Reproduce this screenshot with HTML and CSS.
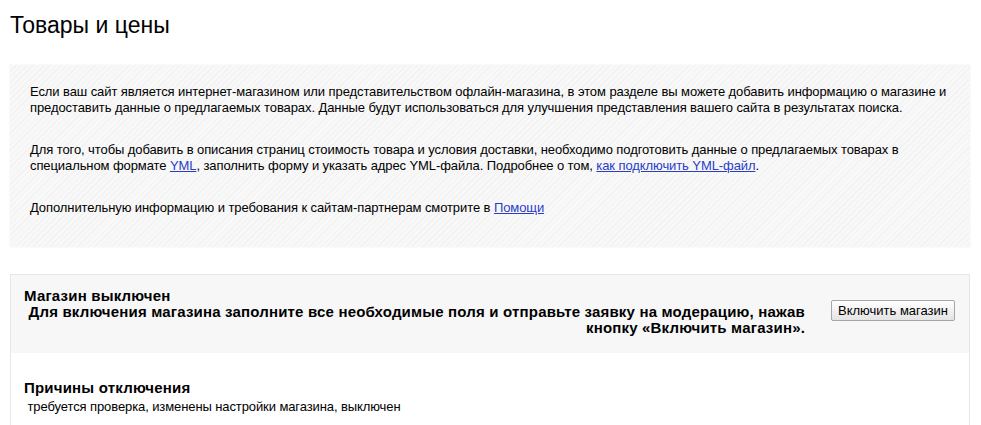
FILE: index.html
```html
<!DOCTYPE html>
<html lang="ru">
<head>
<meta charset="utf-8">
<title>Товары и цены</title>
<link rel="stylesheet" href="styles.css">
</head>
<body>
<div class="page">
  <h1 class="title">Товары и цены</h1>
  <div class="info">
    <p class="info-p">Если ваш сайт является интернет-магазином или представительством офлайн-магазина, в этом разделе вы можете добавить информацию о магазине и предоставить данные о предлагаемых товарах. Данные будут использоваться для улучшения представления вашего сайта в результатах поиска.</p>
    <p class="info-p">Для того, чтобы добавить в описания страниц стоимость товара и условия доставки, необходимо подготовить данные о предлагаемых товарах в специальном формате <a class="link" href="#">YML</a>, заполнить форму и указать адрес YML-файла. Подробнее о том, <a class="link" href="#">как подключить YML-файл</a>.</p>
    <p class="info-p">Дополнительную информацию и требования к сайтам-партнерам смотрите в <a class="link" href="#">Помощи</a></p>
  </div>
  <div class="shop">
    <div class="shop-head">
      <div class="shop-status">
        <div class="shop-title">Магазин выключен</div>
        <div class="shop-desc">Для включения магазина заполните все необходимые поля и отправьте заявку на модерацию, нажав кнопку «Включить магазин».</div>
      </div>
      <button class="btn" type="button">Включить магазин</button>
    </div>
    <div class="shop-body">
      <div class="reasons-title">Причины отключения</div>
      <div class="reasons-text">&nbsp;требуется проверка, изменены настройки магазина, выключен</div>
    </div>
  </div>
</div>
</body>
</html>
```
FILE: styles.css
```css
html, body {
  margin: 0;
  padding: 0;
  background: #fff;
}
body {
  font-family: "Liberation Sans", Arial, sans-serif;
  color: #000;
}
.page {
  padding: 0 11px 0 10px;
}
.title {
  margin: 0;
  padding-top: 11px;
  font-size: 23px;
  line-height: 28px;
  font-weight: normal;
  color: #000;
}
.info {
  margin-top: 26px;
  padding: 19px 20px 31px 20px;
  display: flex;
  flex-direction: column;
  gap: 26px;
  background-color: #f4f4f4;
  background-image: repeating-linear-gradient(135deg, #f2f2f2 0, #f2f2f2 1px, #f8f8f8 1px, #f8f8f8 4px);
  box-shadow: 0 0 1px rgba(0,0,0,0.12);
}
.info-p {
  margin: 0;
  font-size: 13px;
  line-height: 16px;
  letter-spacing: -0.09px;
}
.link {
  color: #2a3dc8;
  text-decoration: underline;
}
.shop {
  margin-top: 27px;
  border: 1px solid #e6e6e6;
  border-bottom: none;
  min-height: 200px;
}
.shop-head {
  display: flex;
  align-items: center;
  gap: 26px;
  padding: 13px 14px 17px 13px;
  background: #f7f7f7;
}
.shop-status {
  flex: 1;
  font-size: 15px;
  line-height: 16px;
  font-weight: bold;
  letter-spacing: 0.2px;
}
.shop-desc {
  text-align: right;
  letter-spacing: 0.18px;
}
.btn {
  width: 124px;
  height: 21px;
  padding: 0;
  font-family: "Liberation Sans", Arial, sans-serif;
  font-size: 13px;
  color: #000;
  border: 1px solid #a6a6a6;
  border-radius: 2px;
  background: linear-gradient(#ffffff, #e4e4e4);
  margin-top: -3px;
}
.shop-body {
  padding: 27px 13px 20px 13px;
}
.reasons-title {
  font-size: 15px;
  line-height: 16px;
  font-weight: bold;
  letter-spacing: 0.2px;
}
.reasons-text {
  margin-top: 3px;
  font-size: 13px;
  line-height: 16px;
  letter-spacing: -0.1px;
}
```
